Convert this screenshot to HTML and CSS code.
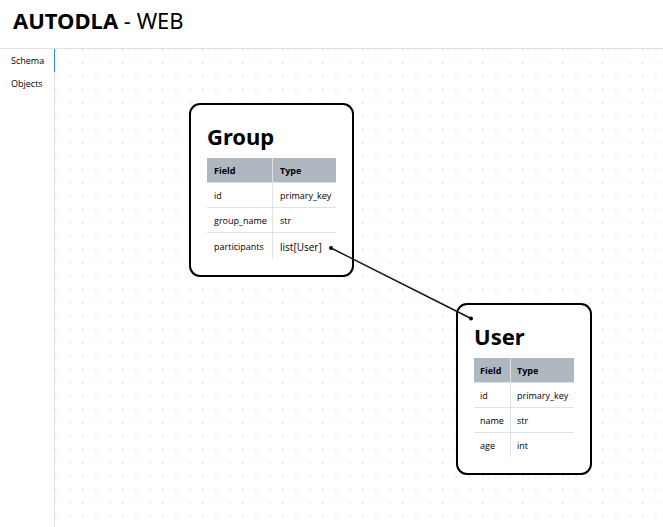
FILE: index.html
```html
<!DOCTYPE html>
<html lang="en">
<head>
<meta charset="utf-8">
<title>AUTODLA - WEB</title>
<link rel="stylesheet" href="styles.css">
</head>
<body>
<header class="header">
  <h1 class="brand"><strong>AUTODLA</strong> - WEB</h1>
</header>
<div class="layout">
  <nav class="sidebar">
    <a class="nav-link active" href="#schema">Schema</a>
    <a class="nav-link" href="#objects">Objects</a>
  </nav>
  <main class="canvas">
    <svg class="grid" aria-hidden="true">
      <defs>
        <pattern id="dots" width="20" height="20" patternUnits="userSpaceOnUse" patternTransform="translate(0.4 0.1) scale(0.66667)">
          <circle cx="1" cy="1" r="1" fill="#c8c8cc"/>
        </pattern>
      </defs>
      <rect width="100%" height="100%" fill="url(#dots)"/>
    </svg>
    <section class="node node-group">
      <h2 class="node-title">Group</h2>
      <table class="fields">
        <thead><tr><th class="col-field">Field</th><th class="col-type">Type</th></tr></thead>
        <tbody>
          <tr><td>id</td><td>primary_key</td></tr>
          <tr><td>group_name</td><td>str</td></tr>
          <tr><td>participants</td><td class="relation">list[User]</td></tr>
        </tbody>
      </table>
    </section>
    <section class="node node-user">
      <h2 class="node-title">User</h2>
      <table class="fields">
        <thead><tr><th class="col-field">Field</th><th class="col-type">Type</th></tr></thead>
        <tbody>
          <tr><td>id</td><td>primary_key</td></tr>
          <tr><td>name</td><td>str</td></tr>
          <tr><td>age</td><td>int</td></tr>
        </tbody>
      </table>
    </section>
    <svg class="edges" aria-hidden="true">
      <path d="M276 199 L416 269.500" stroke="#111" stroke-width="1.400" fill="none"/>
      <circle cx="276" cy="199" r="2"/>
      <circle cx="416" cy="269.500" r="2"/>
    </svg>
  </main>
</div>
</body>
</html>
```

FILE: styles.css
```css
* {
  box-sizing: border-box;
}

body {
  margin: 0;
  min-height: 100vh;
  display: flex;
  flex-direction: column;
  background: #fff;
  color: #000;
  font-family: "Open Sans", "Noto Sans", sans-serif;
  font-size: 9px;
}

.header {
  padding: 5px 13px 13px;
  border-bottom: 1px solid #dee2e6;
}

.brand,
.node-title {
  font-family: "Noto Sans", "Open Sans", sans-serif;
  font-size: 22px;
  line-height: 30px;
}

.brand {
  margin: 0;
  font-weight: 400;
}

.brand strong {
  font-weight: 700;
}

.layout {
  flex: 1;
  display: flex;
}

.sidebar {
  width: 55px;
  border-right: 1px solid #dee2e6;
}

.nav-link {
  display: block;
  margin-right: -1px;
  padding: 0 11px;
  line-height: 23px;
  color: #000;
  text-decoration: none;
}

.nav-link.active {
  border-right: 1px solid #228be6;
}

.canvas {
  flex: 1;
  position: relative;
  overflow: hidden;
}

.grid,
.edges {
  position: absolute;
  inset: 0;
  width: 100%;
  height: 100%;
}

.edges {
  pointer-events: none;
}

.node {
  position: absolute;
  padding: 16px;
  background: #fff;
  border: 2px solid #000;
  border-radius: 11px;
}

.node-group {
  left: 134px;
  top: 54px;
}

.node-user {
  left: 401px;
  top: 254px;
}

.node-title {
  margin: 0 0 7px;
  font-weight: 700;
}

.fields {
  border-collapse: separate;
  border-spacing: 0;
  table-layout: fixed;
}

.fields th,
.fields td {
  height: 25px;
  padding: 2px 6px 0 7px;
  line-height: 12px;
  text-align: left;
  white-space: nowrap;
  border-bottom: 1px solid #dee2e6;
}

.fields th {
  background: #afb7c0;
  font-weight: 700;
}

.fields th:first-child,
.fields td:first-child {
  border-right: 1px solid #dee2e6;
}

.fields tbody tr:last-child td {
  height: 24px;
  border-bottom: 0;
}

.fields tbody tr:last-child .relation {
  height: 26px;
  font-size: 10px;
}

.node-group .fields {
  width: 129px;
}

.node-group .col-field {
  width: 66px;
}

.node-user .fields {
  width: 100px;
}

.node-user .col-field {
  width: 37px;
}

.node-user .fields th,
.node-user .fields td {
  padding-left: 6px;
}
```
